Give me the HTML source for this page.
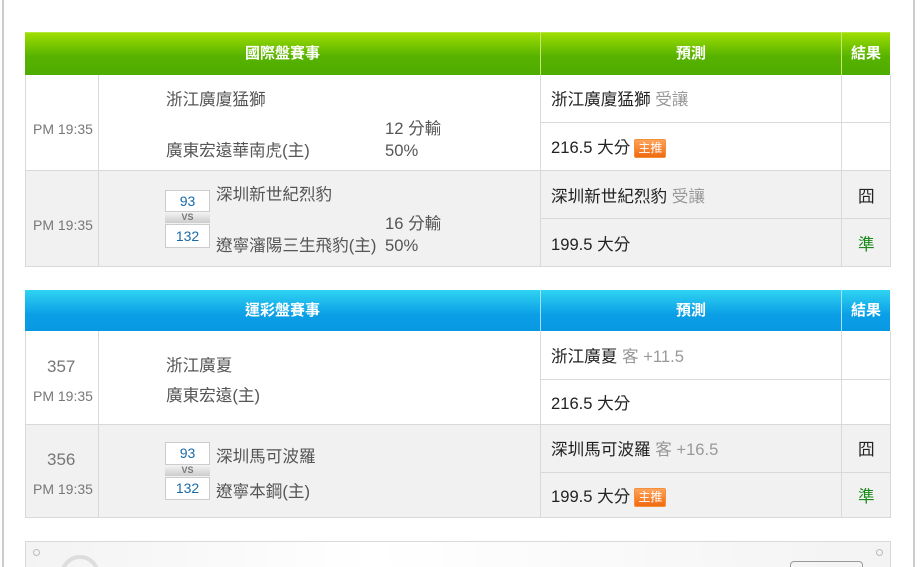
<!DOCTYPE html>
<html style="width:924px;height:567px;overflow:hidden"><head><meta charset="utf-8"><style>
*{margin:0;padding:0;box-sizing:border-box}
body{width:924px;height:567px;background:#fff;position:relative;overflow:hidden;font-family:"Liberation Sans","Noto Sans CJK TC",sans-serif;font-size:16.6px;color:#555}
.a{position:absolute;white-space:nowrap;line-height:20px;margin-top:2px}
.bx{position:absolute}
.vl{position:absolute;width:1px;background:#d9d9d9}
.hl{position:absolute;height:1px;background:#d9d9d9}
.hd{position:absolute;color:#fff;font-weight:bold;font-size:15px;text-align:center;line-height:41px}
.g{background:linear-gradient(#9edd00,#58b300 55%,#4eab00);border-top:1px solid #b8e640}
.b{background:linear-gradient(#2fd3f2,#0b9fe6 60%,#0898e2)}
.sc{position:absolute;width:45px;border:1px solid #ccc;background:#fff;color:#1a6aa8;font-size:14px;text-align:center}
.vs{position:absolute;width:45px;height:11px;background:linear-gradient(#f4f4f4,#ccc);color:#777;font-size:9px;font-weight:bold;text-align:center;line-height:11px}
.tag{display:inline-block;background:linear-gradient(#ffa25a,#f06a10);color:#fff;font-size:12px;padding:0 3px;height:19px;line-height:17px;border-radius:2px;vertical-align:1px;margin-left:4px;border:1px solid #f5903a}
.gr{color:#999}.k{color:#222}
</style></head><body>
<div class="vl" style="left:2px;top:0;height:567px;background:#ccc;width:2px"></div>
<div class="vl" style="left:913px;top:0;height:567px;background:#ccc;width:2px"></div>

<div class="bx" style="left:25px;top:75px;width:866px;height:95px;background:#fff"></div>
<div class="bx" style="left:25px;top:170px;width:866px;height:96px;background:#f1f1f1"></div>
<div class="hd g" style="left:25px;top:32px;width:515px;height:43px">國際盤賽事</div>
<div class="hd g" style="left:541px;top:32px;width:300px;height:43px">預測</div>
<div class="hd g" style="left:842px;top:32px;width:48px;height:43px">結果</div>
<div class="vl" style="left:25px;top:75px;height:191px"></div>
<div class="vl" style="left:98px;top:75px;height:191px"></div>
<div class="vl" style="left:540px;top:32px;height:234px;background:#c5e870"></div>
<div class="vl" style="left:540px;top:75px;height:191px"></div>
<div class="vl" style="left:841px;top:32px;height:234px;background:#c5e870"></div>
<div class="vl" style="left:841px;top:75px;height:191px"></div>
<div class="vl" style="left:890px;top:75px;height:191px"></div>
<div class="hl" style="left:25px;top:170px;width:866px"></div>
<div class="hl" style="left:540px;top:122px;width:351px"></div>
<div class="hl" style="left:540px;top:218px;width:351px"></div>
<div class="hl" style="left:25px;top:266px;width:866px"></div>
<div class="a" style="left:33px;top:117px;font-size:14px;color:#777">PM 19:35</div>
<div class="a" style="left:166px;top:88px">浙江廣廈猛獅</div>
<div class="a" style="left:166px;top:139px">廣東宏遠華南虎(主)</div>
<div class="a" style="left:385px;top:117px">12 分輸</div>
<div class="a" style="left:385px;top:139px">50%</div>
<div class="a k" style="left:551px;top:88px">浙江廣廈猛獅 <span class="gr">受讓</span></div>
<div class="a k" style="left:551px;top:136px">216.5 大分<span class="tag">主推</span></div>
<div class="a" style="left:33px;top:213px;font-size:14px;color:#777">PM 19:35</div>
<div class="sc" style="left:165px;top:190px;height:22px;line-height:20px">93</div>
<div class="vs" style="left:165px;top:212px">VS</div>
<div class="sc" style="left:165px;top:224px;height:24px;line-height:22px">132</div>
<div class="a" style="left:216px;top:183px">深圳新世紀烈豹</div>
<div class="a" style="left:216px;top:234px">遼寧瀋陽三生飛豹(主)</div>
<div class="a" style="left:385px;top:212px">16 分輸</div>
<div class="a" style="left:385px;top:234px">50%</div>
<div class="a k" style="left:551px;top:185px">深圳新世紀烈豹 <span class="gr">受讓</span></div>
<div class="a k" style="left:551px;top:233px">199.5 大分</div>
<div class="a k" style="left:858px;top:185px">囧</div>
<div class="a" style="left:858px;top:233px;color:#1a8a1a">準</div>

<div class="bx" style="left:25px;top:331px;width:866px;height:93px;background:#fff"></div>
<div class="bx" style="left:25px;top:424px;width:866px;height:93px;background:#f1f1f1"></div>
<div class="hd b" style="left:25px;top:290px;width:515px;height:41px">運彩盤賽事</div>
<div class="hd b" style="left:541px;top:290px;width:300px;height:41px">預測</div>
<div class="hd b" style="left:842px;top:290px;width:48px;height:41px">結果</div>
<div class="vl" style="left:25px;top:331px;height:186px"></div>
<div class="vl" style="left:98px;top:331px;height:186px"></div>
<div class="vl" style="left:540px;top:290px;height:227px;background:#a8e0f8"></div>
<div class="vl" style="left:540px;top:331px;height:186px"></div>
<div class="vl" style="left:841px;top:290px;height:227px;background:#a8e0f8"></div>
<div class="vl" style="left:841px;top:331px;height:186px"></div>
<div class="vl" style="left:890px;top:331px;height:186px"></div>
<div class="hl" style="left:25px;top:424px;width:866px"></div>
<div class="hl" style="left:540px;top:379px;width:351px"></div>
<div class="hl" style="left:540px;top:472px;width:351px"></div>
<div class="hl" style="left:25px;top:517px;width:866px"></div>
<div class="a" style="left:47px;top:355px;font-size:17px;color:#777">357</div>
<div class="a" style="left:33px;top:384px;font-size:14px;color:#777">PM 19:35</div>
<div class="a" style="left:166px;top:354px">浙江廣夏</div>
<div class="a" style="left:166px;top:384px">廣東宏遠(主)</div>
<div class="a k" style="left:551px;top:345px">浙江廣夏 <span class="gr">客 +11.5</span></div>
<div class="a k" style="left:551px;top:392px">216.5 大分</div>
<div class="a" style="left:47px;top:448px;font-size:17px;color:#777">356</div>
<div class="a" style="left:33px;top:477px;font-size:14px;color:#777">PM 19:35</div>
<div class="sc" style="left:165px;top:442px;height:23px;line-height:21px">93</div>
<div class="vs" style="left:165px;top:465px">VS</div>
<div class="sc" style="left:165px;top:477px;height:23px;line-height:21px">132</div>
<div class="a" style="left:216px;top:445px">深圳馬可波羅</div>
<div class="a" style="left:216px;top:480px">遼寧本鋼(主)</div>
<div class="a k" style="left:551px;top:438px">深圳馬可波羅 <span class="gr">客 +16.5</span></div>
<div class="a k" style="left:551px;top:485px">199.5 大分<span class="tag">主推</span></div>
<div class="a k" style="left:858px;top:438px">囧</div>
<div class="a" style="left:858px;top:485px;color:#1a8a1a">準</div>

<div class="bx" style="left:25px;top:541px;width:866px;height:30px;border:1px solid #d9d9d9;background:linear-gradient(90deg,#f3f3f3,#fff 40%,#f3f3f3)"></div>
<div class="bx" style="left:33px;top:549px;width:7px;height:7px;border:1px solid #bbb;border-radius:50%"></div>
<div class="bx" style="left:876px;top:549px;width:7px;height:7px;border:1px solid #bbb;border-radius:50%"></div>
<div class="bx" style="left:60px;top:555px;width:40px;height:40px;border:4px solid #ddd;border-radius:50%"></div>
<div class="bx" style="left:790px;top:561px;width:73px;height:20px;border:1px solid #999;border-radius:4px"></div>
</body></html>
